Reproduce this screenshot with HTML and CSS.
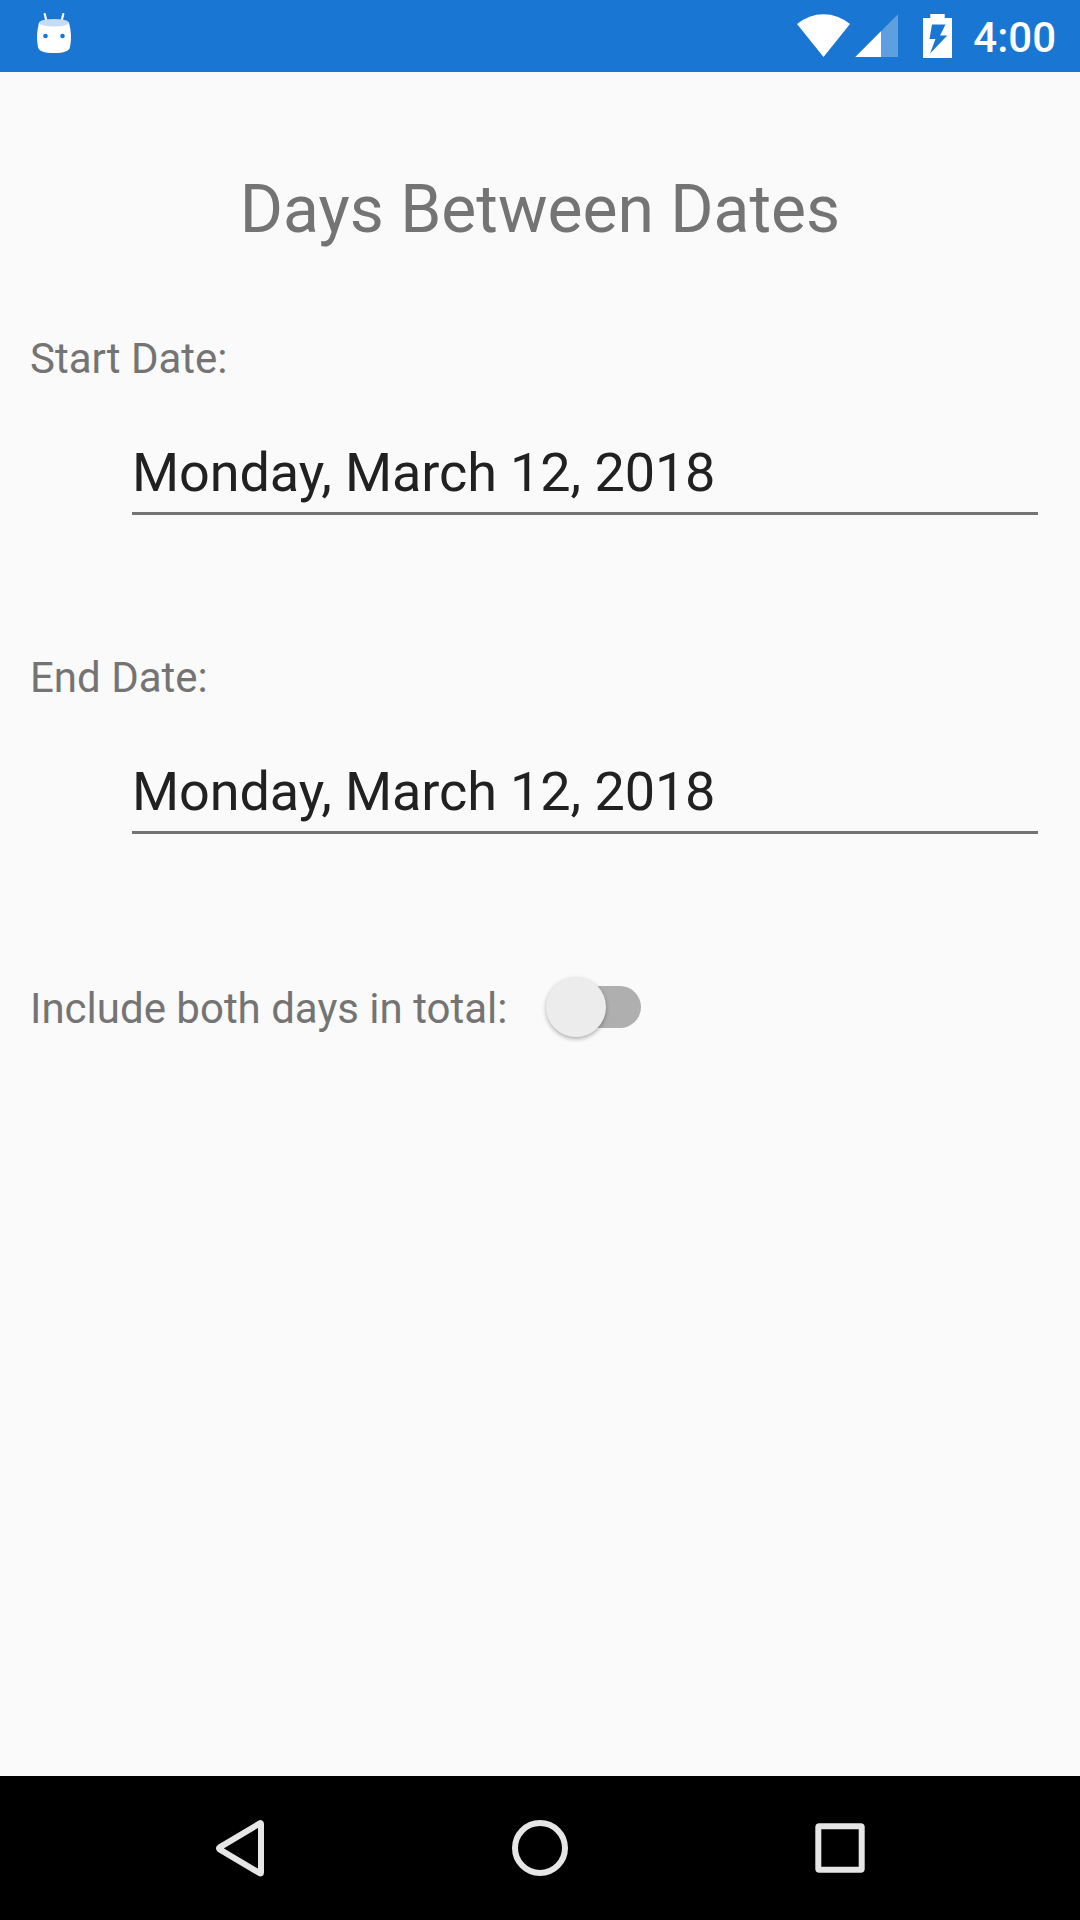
FILE: index.html
```html
<!DOCTYPE html>
<html lang="en">
<head>
<meta charset="utf-8">
<title>Days Between Dates</title>
<link rel="stylesheet" href="styles.css">
</head>
<body>
<div class="screen">
  <header class="status-bar">
    <svg class="robot" width="40" height="72" viewBox="34 0 40 72">
      <path d="M44.7 14 46.4 21M63.3 14 61.6 21" stroke="#fff" stroke-width="2.2" stroke-linecap="round"/>
      <path d="M39 22.5Q54 17 69 22.5Q72.500 36 70 47Q69 53 54 53Q39 53 38 47Q35.500 36 39 22.500Z" fill="#fff"/>
      <ellipse cx="54" cy="22.700" rx="14.800" ry="3.800" fill="#c6dbf4"/>
      <circle cx="45.500" cy="36" r="2.300" fill="#1976d2"/>
      <circle cx="62.500" cy="36" r="2.300" fill="#1976d2"/>
    </svg>
    <div class="indicators">
      <svg width="156" height="72" viewBox="797 0 156 72">
        <path d="M797 24Q809 14.200 823.500 14.200T850 24L823.500 57Z" fill="#fff"/>
        <path d="M898 14.300V57H855.300Z" fill="#5e9fe0"/>
        <path d="M881 31.300V57H855.300Z" fill="#fff"/>
        <path fill-rule="evenodd" d="M930.300 14H944.700V18H952V58H923V18H930.300ZM932 24.500 929.500 39H935.500L930 53.500 947.300 35.500H940L945.500 24.500Z" fill="#fff"/>
      </svg>
      <span class="clock">4:00</span>
    </div>
  </header>
  <main class="content">
    <h1 class="title">Days Between Dates</h1>
    <section class="field">
      <div class="label">Start Date:</div>
      <div class="date">Monday, March 12, 2018</div>
    </section>
    <section class="field">
      <div class="label">End Date:</div>
      <div class="date">Monday, March 12, 2018</div>
    </section>
    <div class="option">
      <span class="label">Include both days in total:</span>
      <div class="switch" role="switch" aria-checked="false"><div class="thumb"></div></div>
    </div>
  </main>
  <nav class="nav-bar">
    <svg width="60" height="60" viewBox="0 0 60 60"><path d="M49.800 5.400Q51 4.600 51 6V54.500Q51 56 49.800 55.200L9.600 31.400Q8.200 30.300 9.600 29.400Z" class="nav-icon back"/></svg>
    <svg width="60" height="60" viewBox="0 0 60 60"><circle cx="30" cy="30" r="25" class="nav-icon"/></svg>
    <svg width="60" height="60" viewBox="0 0 60 60"><rect x="8.300" y="8.300" width="43.400" height="43.400" rx="1" class="nav-icon"/></svg>
  </nav>
</div>
</body>
</html>
```
FILE: styles.css
```css
body {
  margin: 0;
  font-family: Roboto, sans-serif;
}

.screen {
  display: flex;
  flex-direction: column;
  width: 1080px;
  height: 1920px;
  background: #fafafa;
}

.status-bar {
  display: flex;
  justify-content: space-between;
  box-sizing: border-box;
  height: 72px;
  padding: 0 24px 0 34px;
  background: #1976d2;
}

.indicators {
  display: flex;
  gap: 20px;
}

.clock {
  padding-top: 13px;
  font-size: 42px;
  font-weight: 500;
  line-height: 50px;
  color: #fff;
}

.content {
  flex: 1;
  padding: 99px 42px 0 30px;
}

.title {
  margin: 0 -12px 85px 0;
  font-size: 66px;
  font-weight: 400;
  line-height: 78px;
  text-align: center;
  color: #747474;
}

.field {
  height: 319px;
}

.label {
  font-size: 42px;
  line-height: 50px;
  color: #747474;
}

.date {
  box-sizing: border-box;
  height: 74px;
  margin: 57px 0 0 102px;
  border-bottom: 3px solid #747474;
  font-size: 54px;
  line-height: 64px;
  letter-spacing: -0.11px;
  color: #212121;
}

.option {
  display: flex;
  align-items: flex-start;
  gap: 44px;
  padding-top: 12px;
}

.switch {
  width: 90px;
  height: 42px;
  margin-top: 2px;
  border-radius: 21px;
  background: #afafaf;
}

.thumb {
  width: 60px;
  height: 60px;
  margin: -9px 0 0 -5.5px;
  border-radius: 50%;
  background: #ececec;
  box-shadow: 0 2px 4px rgba(0, 0, 0, 0.3);
}

.switch::before {
  content: "";
  display: table;
}

.nav-bar {
  display: flex;
  justify-content: space-between;
  align-items: center;
  box-sizing: border-box;
  height: 144px;
  padding: 0 210px;
  background: #000;
}

.nav-icon {
  fill: none;
  stroke: #e6e6e6;
  stroke-width: 6;
}

.back {
  stroke-linejoin: round;
}
```
